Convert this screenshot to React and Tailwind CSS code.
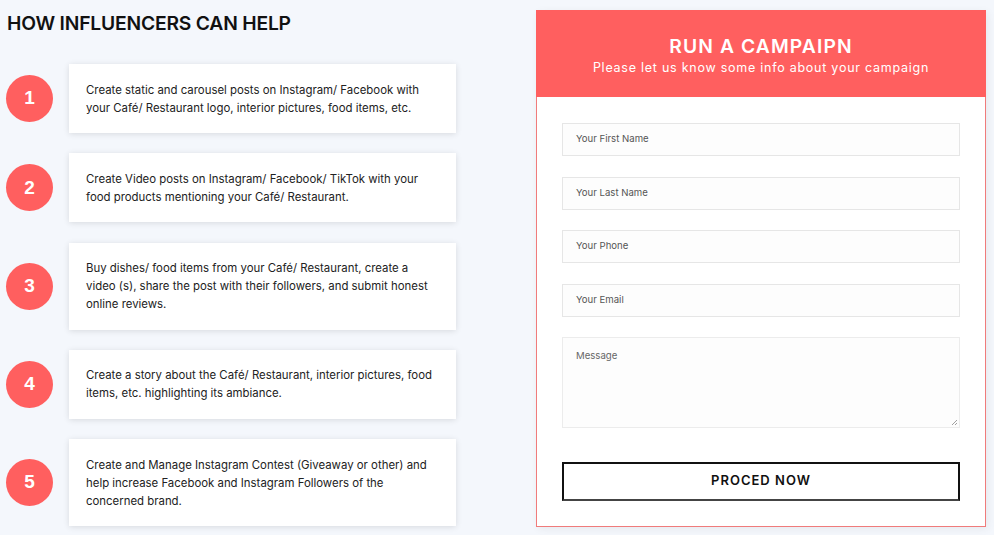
import React from "react";

const items = [
  ["Create static and carousel posts on Instagram/ Facebook with", "your Café/ Restaurant logo, interior pictures, food items, etc."],
  ["Create Video posts on Instagram/ Facebook/ TikTok with your", "food products mentioning your Café/ Restaurant."],
  ["Buy dishes/ food items from your Café/ Restaurant, create a", "video (s), share the post with their followers, and submit honest", "online reviews."],
  ["Create a story about the Café/ Restaurant, interior pictures, food", "items, etc. highlighting its ambiance."],
  ["Create and Manage Instagram Contest (Giveaway or other) and", "help increase Facebook and Instagram Followers of the", "concerned brand."],
];

const font = { fontFamily: "Inter, 'Open Sans', sans-serif" };

export default function App() {
  return (
    <div className="w-[994px] h-[535px] overflow-hidden bg-[#f4f7fc] flex" style={font}>
      <div className="w-[536px] shrink-0 pl-[6px] pt-[11px]">
        <h2 className="text-[19.3px] leading-[24px] font-semibold text-[#111] tracking-[-0.2px] pl-[1px]">
          HOW INFLUENCERS CAN HELP
        </h2>
        <div className="mt-[29px] flex flex-col gap-[20.3px]">
          {items.map((lines, i) => (
            <div key={i} className="flex items-center gap-[16px]">
              <div
                className="w-[47px] h-[47px] rounded-full bg-[#ff5f5f] flex items-center justify-center text-white text-[19px] font-bold"
                style={{ fontFamily: "'Liberation Sans', Arial, sans-serif" }}
              >
                {i + 1}
              </div>
              <div className="w-[387px] bg-white shadow-[0_1px_6px_rgba(0,0,0,0.12)] pl-[17px] pr-[10px] py-[16.5px] text-[11.4px] leading-[18px] text-[#222] whitespace-nowrap">
                {lines.map((l, j) => (
                  <div key={j}>{l}</div>
                ))}
              </div>
            </div>
          ))}
        </div>
      </div>
      <div className="w-[450px] shrink-0 mt-[10px] self-start shadow-[2px_2px_8px_rgba(0,0,0,0.06)]">
        <div className="bg-[#ff5f5f] h-[87px] flex flex-col items-center pt-[24px] text-white">
          <div className="text-[19.3px] leading-[24px] font-semibold tracking-[1.1px]">RUN A CAMPAIPN</div>
          <div className="text-[12.5px] leading-[17px] tracking-[0.75px] mt-[1px]">Please let us know some info about your campaign</div>
        </div>
        <div className="bg-white border border-t-0 border-[#f07b7b] px-[25px] pt-[26px] pb-[25px] flex flex-col">
          {["Your First Name", "Your Last Name", "Your Phone", "Your Email"].map((p) => (
            <div key={p} className="h-[33px] mb-[20.5px] border border-[#e6e6e6] bg-[#fdfdfd] flex items-center pl-[13px] text-[9.6px] text-[#555]">
              {p}
            </div>
          ))}
          <div className="relative h-[91px] border border-[#ececec] bg-[#fdfdfd] pl-[13px] pt-[11px] text-[9.6px] text-[#666]">
            Message
            <svg className="absolute right-[1px] bottom-[1px]" width="8" height="8" viewBox="0 0 8 8">
              <path d="M7 2 L2 7 M7 5 L5 7" stroke="#888" strokeWidth="0.8" />
            </svg>
          </div>
          <div className="mt-[33.5px] h-[39px] border-2 border-[#111] border-b-[#444] flex items-center justify-center text-[13px] font-semibold tracking-[1px] text-[#111]">
            PROCED NOW
          </div>
        </div>
      </div>
    </div>
  );
}
